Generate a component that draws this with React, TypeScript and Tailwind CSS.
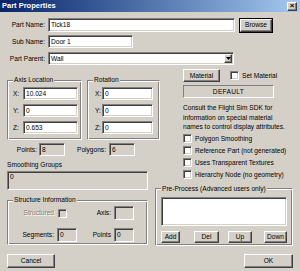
import React from "react";

const sunken =
  "border border-t-[#808080] border-l-[#808080] border-r-white border-b-white shadow-[inset_1px_1px_0_#404040,inset_-1px_-1px_0_#d4d0c8]";
const raised =
  "border border-t-white border-l-white border-r-[#404040] border-b-[#404040] shadow-[inset_-1px_-1px_0_#808080] bg-[#d4d0c8]";
const etched =
  "border border-t-[#808080] border-l-[#808080] border-r-white border-b-white shadow-[inset_1px_1px_0_#fff,inset_-1px_-1px_0_#808080]";

function Field({
  className = "",
  gray = false,
  children,
}: {
  className?: string;
  gray?: boolean;
  children?: React.ReactNode;
}) {
  return (
    <div
      className={`${sunken} ${gray ? "bg-[#d4d0c8]" : "bg-white"} flex items-center pl-[2px] whitespace-nowrap overflow-hidden ${className}`}
    >
      {children}
    </div>
  );
}

function Btn({ className = "", children }: { className?: string; children?: React.ReactNode }) {
  return (
    <div className={`${raised} flex items-center justify-center whitespace-nowrap ${className}`}>{children}</div>
  );
}

function Check({ className = "", gray = false }: { className?: string; gray?: boolean }) {
  return <div className={`${sunken} ${gray ? "bg-[#d4d0c8]" : "bg-white"} w-[9px] h-[9px] shrink-0 ${className}`} />;
}

function Group({
  label,
  className = "",
  legendClass = "ml-[5px]",
  children,
}: {
  label: string;
  className?: string;
  legendClass?: string;
  children?: React.ReactNode;
}) {
  return (
    <fieldset className={`${etched} min-w-0 ${className}`}>
      <legend className={`px-[1px] bg-[#d4d0c8] leading-[8px] h-[8px] ${legendClass}`}>{label}</legend>
      {children}
    </fieldset>
  );
}

export default function App() {
  return (
    <div className="w-[300px] h-[271px] bg-[#d4d0c8] flex flex-col overflow-hidden text-[6.6px] leading-[8px] text-black font-[family-name:Liberation_Sans,Arial,sans-serif]">
      {/* Title bar */}
      <div className="h-[12px] shrink-0 flex items-center bg-linear-to-r from-[#0a246a] to-[#a6caf0] pl-[2px] pr-[3px]">
        <span className="text-white font-bold text-[7.5px] leading-[10px]">Part Properties</span>
        <div className={`${raised} ml-auto w-[10px] h-[9px] flex items-center justify-center text-[8px] leading-[8px] font-bold`}>
          ×
        </div>
      </div>

      {/* Part Name */}
      <div className="mt-[6px] flex items-center h-[14px]">
        <div className="w-[45px] text-right">Part Name:</div>
        <Field className="ml-[3px] w-[187px] h-[14px]">Tick18</Field>
        <Btn className="ml-[5px] w-[32px] h-[13px] outline outline-black">Browse</Btn>
      </div>

      {/* Sub Name */}
      <div className="mt-[3px] flex items-center h-[13px]">
        <div className="w-[45px] text-right">Sub Name:</div>
        <Field className="ml-[3px] w-[85px] h-[13px]">Door 1</Field>
      </div>

      {/* Part Parent */}
      <div className="mt-[4px] flex items-center h-[13px]">
        <div className="w-[45px] text-right">Part Parent:</div>
        <Field className="ml-[3px] w-[186px] h-[13px] pr-[1px]">
          <span>Wall</span>
          <Btn className="ml-auto w-[8px] h-[9px]">
            <svg width="5" height="3" viewBox="0 0 5 3">
              <path d="M0 0h5L2.5 3z" fill="#000" />
            </svg>
          </Btn>
        </Field>
      </div>

      {/* Main */}
      <div className="mt-[4px] flex">
        {/* Left column */}
        <div className="ml-[7px] w-[141px] flex flex-col">
          <div className="mt-[7px] flex w-[153px] h-[64px]">
            <Group label="Axis Location" className="w-[75px] h-[64px]">
              <div className="flex flex-col gap-[4px] mt-[3px]">
                {[
                  ["X:", "10.024"],
                  ["Y:", "0"],
                  ["Z:", "0.653"],
                ].map(([l, v]) => (
                  <div key={l} className="flex items-center h-[13px] pl-[5px]">
                    <div className="w-[10px]">{l}</div>
                    <Field className="w-[55px] h-[13px]">{v}</Field>
                  </div>
                ))}
              </div>
            </Group>
            <Group label="Rotation" className="ml-[5px] w-[73px] h-[64px]">
              <div className="flex flex-col gap-[4px] mt-[3px]">
                {["X:", "Y:", "Z:"].map((l) => (
                  <div key={l} className="flex items-center h-[13px] pl-[7px]">
                    <div className="w-[7px]">{l}</div>
                    <Field className="w-[51px] h-[13px]">0</Field>
                  </div>
                ))}
              </div>
            </Group>
          </div>

          <div className="mt-[3px] flex items-center h-[13px]">
            <div className="w-[30px] text-right">Points:</div>
            <Field gray className="ml-[2px] w-[26px] h-[13px]">8</Field>
            <div className="w-[41px] text-right">Polygons:</div>
            <Field gray className="ml-[3px] w-[26px] h-[13px]">6</Field>
          </div>

          <div className="mt-[5px] h-[8px]">Smoothing Groups</div>
          <Field gray className="mt-[2px] w-[141px] h-[19px] !items-start pt-[1px]">0</Field>

          <Group label="Structure Information" className="mt-[6px] w-[141px] h-[49px]">
            <div className="mt-[2px] flex items-center h-[14px]">
              <div className="w-[46px] text-right text-[#808080] [text-shadow:1px_1px_0_#fff]">Structured</div>
              <div className="ml-[3px] w-[20px]">
                <Check gray className="ml-[1px]" />
              </div>
              <div className="w-[34px] text-right">Axis:</div>
              <Field gray className="ml-[3px] w-[20px] h-[14px]" />
            </div>
            <div className="mt-[8px] flex items-center h-[14px]">
              <div className="w-[46px] text-right">Segments:</div>
              <Field gray className="ml-[3px] w-[20px] h-[14px]">0</Field>
              <div className="w-[34px] text-right">Points</div>
              <Field gray className="ml-[3px] w-[20px] h-[14px]">0</Field>
            </div>
          </Group>
        </div>

        {/* Right column */}
        <div className="ml-[7px] w-[138px] flex flex-col">
          <div className="pl-[28px] flex items-center h-[13px]">
            <Btn className="w-[37px] h-[13px]">Material</Btn>
            <Check className="ml-[10px]" />
            <span className="ml-[3px]">Set Material</span>
          </div>
          <div className="ml-[28px] mt-[3px] w-[91px] h-[13px] border border-t-[#808080] border-l-[#808080] border-r-white border-b-white flex items-center justify-center tracking-[0.3px]">
            DEFAULT
          </div>
          <div className="ml-[28px] mt-[5px] leading-[9.5px]">
            Consult the Flight Sim SDK for
            <br />
            information on special material
            <br />
            names to control display attributes.
          </div>
          <div className="ml-[28px] mt-[1px] flex flex-col">
            {[
              "Polygon Smoothing",
              "Reference Part (not generated)",
              "Uses Transparent Textures",
              "Hierarchy Node (no geometry)",
            ].map((t) => (
              <div key={t} className="h-[12px] flex items-center">
                <Check />
                <span className="ml-[3px] whitespace-nowrap">{t}</span>
              </div>
            ))}
          </div>

          <Group label="Pre-Process (Advanced users only)" className="mt-[4px] w-[138px] h-[61px]">
            <Field className="ml-[5px] mt-[4px] w-[126px] h-[29px]" />
            <div className="mt-[5px] flex h-[12px]">
              <Btn className="ml-[5px] w-[19px] h-[12px]">Add</Btn>
              <Btn className="ml-[14px] w-[25px] h-[12px]">Del</Btn>
              <Btn className="ml-[9px] w-[24px] h-[12px]">Up</Btn>
              <Btn className="ml-[12px] w-[23px] h-[12px]">Down</Btn>
            </div>
          </Group>
        </div>
      </div>

      {/* Bottom buttons */}
      <div className="mt-[8px] flex h-[14px] px-[7px]">
        <Btn className="w-[48px] h-[14px]">Cancel</Btn>
        <Btn className="ml-auto w-[49px] h-[14px]">OK</Btn>
      </div>
    </div>
  );
}
